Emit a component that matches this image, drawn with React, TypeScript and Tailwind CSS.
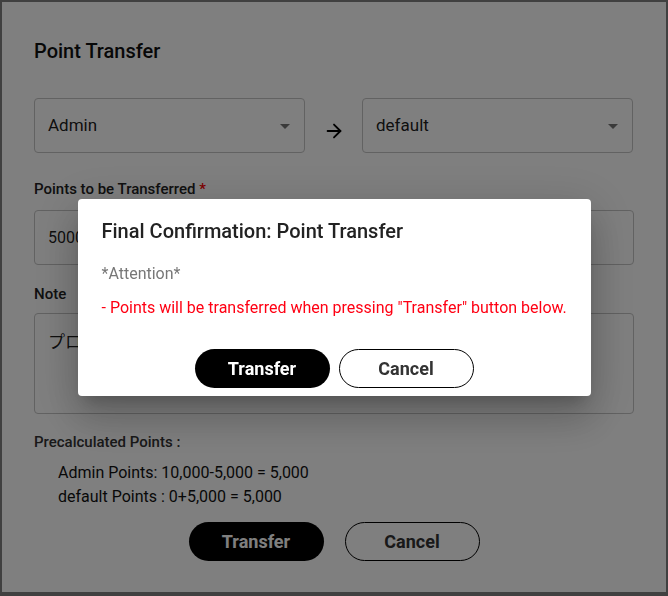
import { ArrowRight } from "lucide-react";

const FONT = { fontFamily: "Roboto, 'Noto Sans CJK JP', sans-serif" };

function Caret() {
  return (
    <svg width="24" height="24" viewBox="0 0 24 24" className="absolute right-[7px] top-1/2 -translate-y-1/2 fill-[#757575]">
      <path d="M7 10l5 5 5-5z" />
    </svg>
  );
}

function SelectBox({ value }: { value: string }) {
  return (
    <div className="relative w-[271px] h-[55px] border border-[#c4c4c4] rounded-[4px] flex items-center pl-[13px] text-[17px] text-black/90">
      {value}
      <Caret />
    </div>
  );
}

function PillButton({ label, dark }: { label: string; dark?: boolean }) {
  return (
    <button
      className={
        dark
          ? "w-[135px] h-[39px] rounded-full bg-black text-white text-[18px] font-bold"
          : "w-[135px] h-[39px] rounded-full bg-white border border-black text-[#333] text-[18px] font-bold"
      }
    >
      {label}
    </button>
  );
}

export default function App() {
  return (
    <div className="w-[668px] h-[596px] bg-[#808080] pt-[2px] pl-[2px] overflow-hidden" style={FONT}>
      <div className="w-[664px] h-[590px] bg-white px-[32px] flex flex-col">
        <h2 className="pt-[35px] text-[20px] leading-[28px] font-medium text-[#111]">Point Transfer</h2>

        <div className="mt-[33px] flex items-center">
          <SelectBox value="Admin" />
          <div className="w-[57px] flex justify-center pt-[10px]">
            <ArrowRight size={22} strokeWidth={2} className="text-black" />
          </div>
          <SelectBox value="default" />
        </div>

        <label className="mt-[26px] text-[15px] leading-[20px] font-medium text-[#222]">
          Points to be Transferred <span className="text-[#ff0000]">*</span>
        </label>
        <div className="mt-[11px] h-[55px] border border-[#c4c4c4] rounded-[4px] flex items-center pl-[13px] text-[16px] text-black/90">
          5000
        </div>

        <label className="mt-[19px] text-[15px] leading-[20px] font-medium text-[#222]">Note</label>
        <div className="mt-[9px] h-[101px] border border-[#c4c4c4] rounded-[4px] pl-[13px] pt-[16px] text-[17px] text-black/90">
          プロモーション用ポイント移行
        </div>

        <p className="mt-[18px] text-[15px] leading-[20px] font-medium text-[#333]">Precalculated Points :</p>
        <div className="mt-[9px] pl-[24px] text-[16px] leading-[24px] text-[#111]">
          <p>Admin Points: 10,000-5,000 = 5,000</p>
          <p>default Points : 0+5,000 = 5,000</p>
        </div>

        <div className="mt-[13px] flex justify-center gap-[21px]">
          <PillButton label="Transfer" dark />
          <PillButton label="Cancel" />
        </div>
      </div>

      <div className="fixed inset-0 bg-black/50 flex items-center justify-center">
        <div className="w-[513px] h-[197px] -mt-[1px] bg-white rounded-[4px] shadow-[0_11px_15px_-7px_rgba(0,0,0,0.2),0_24px_38px_3px_rgba(0,0,0,0.14),0_9px_46px_8px_rgba(0,0,0,0.12)] px-[24px] pt-[19px] flex flex-col">
          <h3 className="text-[20px] leading-[26px] font-medium text-[#222]">Final Confirmation: Point Transfer</h3>
          <p className="mt-[19px] text-[16px] leading-[22px] text-[#777]">*Attention*</p>
          <p className="mt-[12px] text-[16px] leading-[22px] text-[#ff0013] whitespace-nowrap">
            - Points will be transferred when pressing "Transfer" button below.
          </p>
          <div className="mt-[30px] flex justify-center gap-[9px]">
            <PillButton label="Transfer" dark />
            <PillButton label="Cancel" />
          </div>
        </div>
      </div>
    </div>
  );
}
